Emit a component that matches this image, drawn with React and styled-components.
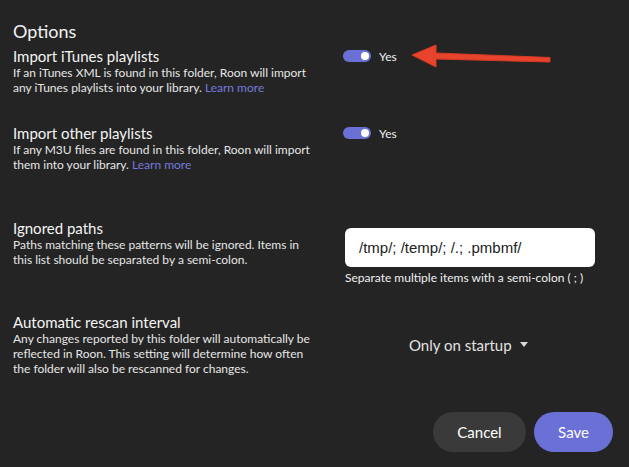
import React from 'react'
import styled, { createGlobalStyle } from 'styled-components'

const Global = createGlobalStyle`
    html, body {
        margin: 0;
        background: #242424;
    }
    body {
        font-family: Lato, "Noto Sans", sans-serif;
        color: #f2f2f2;
    }
`

const Page = styled.div`
    position: relative;
    width: 629px;
    height: 467px;
    box-sizing: border-box;
    padding: 20px 16px 0 13px;
    overflow: hidden;
`

const Heading = styled.h2`
    margin: 0 0 5px;
    font-size: 18px;
    font-weight: 400;
    line-height: 22px;
`

const Row = styled.div`
    display: grid;
    grid-template-columns: 330px 1fr;
    align-items: ${p => p.$align || 'start'};
    margin-bottom: ${p => p.$space}px;
`

const Label = styled.div`
    display: flex;
    flex-direction: column;
`

const Title = styled.div`
    font-size: 15px;
    line-height: 18px;
    color: #f4f4f4;
`

const Desc = styled.div`
    font-size: 12px;
    line-height: 15px;
    color: #e6e6e6;
    width: 305px;

    a {
        color: #7579dc;
        text-decoration: none;
    }
`

const ToggleWrap = styled.div`
    display: flex;
    align-items: center;
    gap: 8px;
    height: 18px;
    font-size: 12px;
    color: #f0f0f0;
`

const Switch = styled.div`
    position: relative;
    width: 28px;
    height: 12px;
    border-radius: 6px;
    background: #6b70d6;

    &::after {
        content: '';
        position: absolute;
        right: 2px;
        top: 2px;
        width: 8px;
        height: 8px;
        border-radius: 50%;
        background: #fff;
    }
`

const Field = styled.div`
    display: flex;
    flex-direction: column;
    gap: 3px;
    padding: 9px 0 0 2px;
`

const Input = styled.div`
    width: 250px;
    height: 39px;
    box-sizing: border-box;
    border-radius: 6px;
    background: #fff;
    color: #222;
    font-family: "Liberation Sans", Arial, sans-serif;
    font-size: 15px;
    display: flex;
    align-items: center;
    padding-left: 14px;
`

const Hint = styled.div`
    font-size: 12px;
    line-height: 15px;
    color: #f0f0f0;
`

const Select = styled.div`
    display: flex;
    align-items: center;
    gap: 8px;
    padding-left: 66px;
    font-size: 15px;
    color: #e2e2e2;
`

const Caret = styled.span`
    width: 0;
    height: 0;
    border-left: 4px solid transparent;
    border-right: 4px solid transparent;
    border-top: 5px solid #d8d8d8;
`

const Actions = styled.div`
    display: flex;
    justify-content: flex-end;
    gap: 8px;
`

const Button = styled.button`
    height: 40px;
    width: ${p => p.$w}px;
    border: none;
    border-radius: 20px;
    background: ${p => p.$primary ? '#6b70d6' : '#3a3a3a'};
    color: #fff;
    font-family: Lato, sans-serif;
    font-size: 15px;
`

const Arrow = styled.svg`
    position: absolute;
    left: 410px;
    top: 40px;
`

export default function App() {
    return (
        <Page>
            <Global />
            <Heading>Options</Heading>

            <Row $space={29}>
                <Label>
                    <Title>Import iTunes playlists</Title>
                    <Desc>If an iTunes XML is found in this folder, Roon will import any iTunes playlists into your library. <a href="#">Learn more</a></Desc>
                </Label>
                <ToggleWrap>
                    <Switch />
                    <span>Yes</span>
                </ToggleWrap>
            </Row>

            <Row $space={47}>
                <Label>
                    <Title>Import other playlists</Title>
                    <Desc>If any M3U files are found in this folder, Roon will import them into your library. <a href="#">Learn more</a></Desc>
                </Label>
                <ToggleWrap>
                    <Switch />
                    <span>Yes</span>
                </ToggleWrap>
            </Row>

            <Row $space={28}>
                <Label>
                    <Title>Ignored paths</Title>
                    <Desc>Paths matching these patterns will be ignored. Items in this list should be separated by a semi-colon.</Desc>
                </Label>
                <Field>
                    <Input>/tmp/; /temp/; /.; .pmbmf/</Input>
                    <Hint>Separate multiple items with a semi-colon ( ; )</Hint>
                </Field>
            </Row>

            <Row $space={36} $align="center">
                <Label>
                    <Title>Automatic rescan interval</Title>
                    <Desc>Any changes reported by this folder will automatically be reflected in Roon. This setting will determine how often the folder will also be rescanned for changes.</Desc>
                </Label>
                <Select>
                    Only on startup <Caret />
                </Select>
            </Row>

            <Actions>
                <Button $w={93}>Cancel</Button>
                <Button $w={79} $primary>Save</Button>
            </Actions>

            <Arrow width="145" height="30" viewBox="0 0 145 30">
                <path d="M140 17.5 L26 13 L26 5 L2 15 L26 27 L26 19 L140 22 Z" fill="#e8432c" stroke="#d63a24" strokeWidth="1" strokeLinejoin="round" />
            </Arrow>
        </Page>
    )
}
